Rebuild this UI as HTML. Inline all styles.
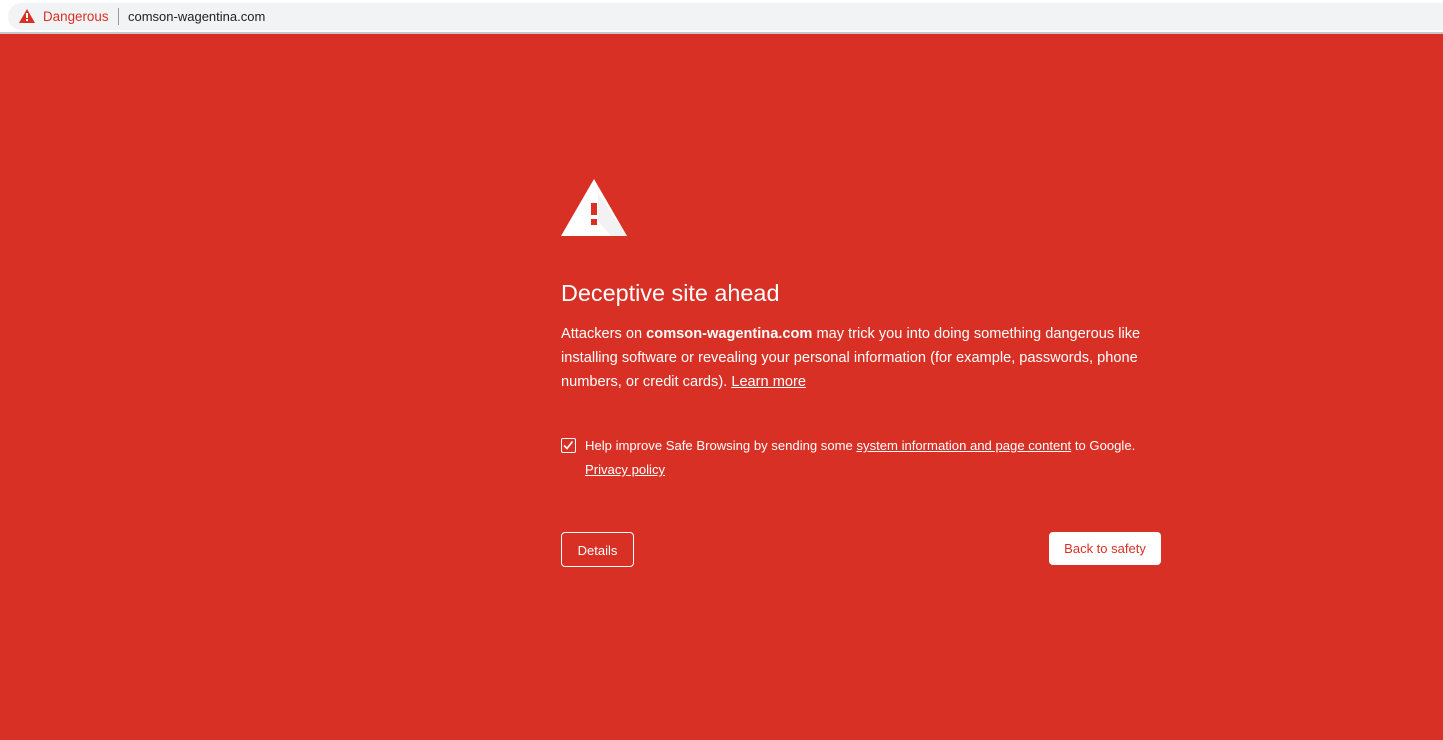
<!DOCTYPE html>
<html><head><style>
*{margin:0;padding:0;box-sizing:border-box}
body{width:1443px;height:740px;overflow:hidden;background:#d93025;font-family:"Liberation Sans",sans-serif;position:relative}
.top{position:absolute;left:0;top:0;width:1443px;height:34px;background:#fff;border-bottom:2px solid #c8c8c8}
.pill{position:absolute;left:8px;top:3px;right:0;height:27px;background:#f1f3f4;border-radius:14px 0 0 14px}
.dang{position:absolute;left:43px;top:9px;font-size:13.4px;color:#d93025}
.sep{position:absolute;left:118px;top:8px;width:1px;height:17px;background:#999}
.url{position:absolute;left:128px;top:9px;font-size:13px;color:#202124}
.w{color:#fff;position:absolute}
h1{font-weight:normal;font-size:23.4px;left:561px;top:280px}
.p{left:561px;top:322px;width:610px;font-size:14.6px;line-height:24px}
a{color:#fff;text-decoration:underline}
.cb{left:561px;top:438px;width:15px;height:15px;border:1.5px solid #fff;border-radius:2px}
.chk{left:585px;top:434px;font-size:13.1px;line-height:24px;width:590px}
.btn1{left:561px;top:532px;width:73px;height:35px;border:1px solid #fff;border-radius:4px;font-size:13px;text-align:center;line-height:35px}
.btn2{left:1049px;top:532px;width:112px;height:33px;background:#fff;border-radius:4px;font-size:13px;text-align:center;line-height:34px;color:#d93025;position:absolute}
</style></head><body>
<div class="top"><div class="pill"></div>
<svg style="position:absolute;left:19px;top:9px" width="16" height="14" viewBox="0 0 16 14"><path d="M8 0L16 14H0Z" fill="#d93025"/><rect x="7" y="4" width="2" height="5" fill="#fff"/><rect x="7" y="10" width="2" height="2" fill="#fff"/></svg>
<div class="dang">Dangerous</div><div class="sep"></div><div class="url">comson-wagentina.com</div></div>
<svg style="position:absolute;left:561px;top:179px" width="66" height="57" viewBox="0 0 66 57"><path d="M33 0L66 57H0Z" fill="#fff"/><path d="M37 14L66 57H50L37 42Z" fill="#f2f2f2"/><rect x="30" y="24" width="6" height="12" fill="#d93025"/><rect x="30" y="40" width="6" height="6" fill="#d93025"/></svg>
<h1 class="w">Deceptive site ahead</h1>
<div class="w p">Attackers on <b>comson-wagentina.com</b> may trick you into doing something dangerous like installing software or revealing your personal information (for example, passwords, phone numbers, or credit cards). <a>Learn more</a></div>
<div class="w cb"><svg width="12" height="12" viewBox="0 0 12 12" style="position:absolute;left:0;top:0"><path d="M2 6.5L5 9.5L10.5 2.5" stroke="#fff" stroke-width="1.6" fill="none"/></svg></div>
<div class="w chk">Help improve Safe Browsing by sending some <a>system information and page content</a> to Google.<br><a>Privacy policy</a></div>
<div class="w btn1">Details</div>
<div class="btn2">Back to safety</div>
</body></html>
